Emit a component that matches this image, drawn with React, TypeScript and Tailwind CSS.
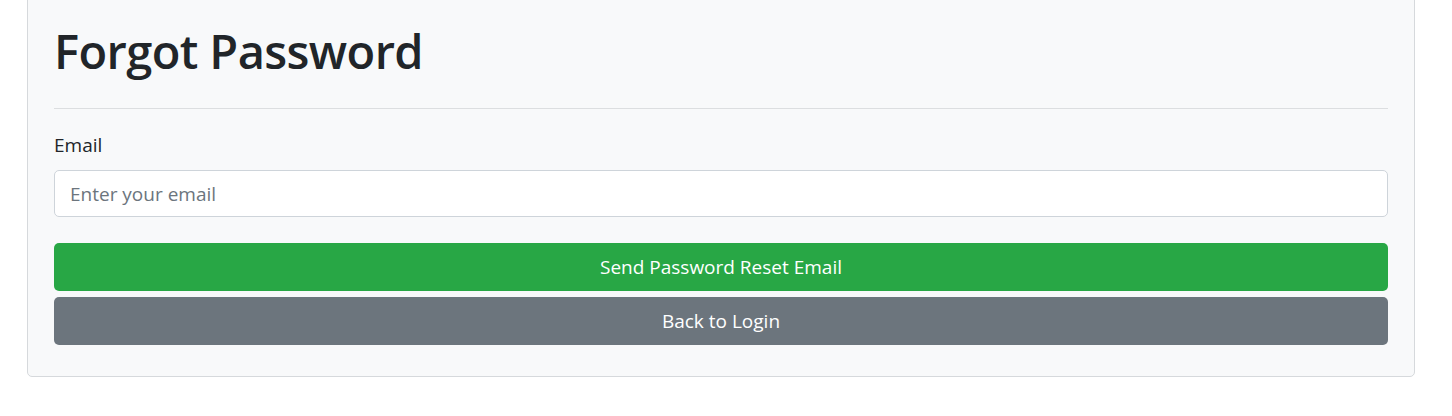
export default function App() {
  return (
    <div className="min-h-[416px] bg-white font-['Open_Sans',sans-serif] text-[#212529]">
      <div className="-mt-[6px] ml-[27px] w-[1388px] rounded-[5px] border border-[#d6d9dc] bg-[#f8f9fa] px-[26px] pt-[26px] pb-[31px]">
        <h1 className="text-[47px] leading-[60px] font-semibold tracking-[-0.6px]">Forgot Password</h1>
        <hr className="mt-[27px] mb-[21px] border-t border-[#dcdee0]" />
        <label className="block text-[19px] leading-[30px] mb-[10px]">Email</label>
        <input
          type="email"
          placeholder="Enter your email"
          className="block w-full h-[47px] rounded-[5px] border border-[#ced4da] bg-white px-[15px] text-[19px] placeholder:text-[#6c757d] outline-none"
        />
        <div className="mt-[26px] flex flex-col gap-[6px]">
          <button className="h-[48px] w-full rounded-[5px] bg-[#28a745] text-[19px] text-white">
            Send Password Reset Email
          </button>
          <button className="h-[48px] w-full rounded-[5px] bg-[#6c757d] text-[19px] text-white">
            Back to Login
          </button>
        </div>
      </div>
    </div>
  )
}
